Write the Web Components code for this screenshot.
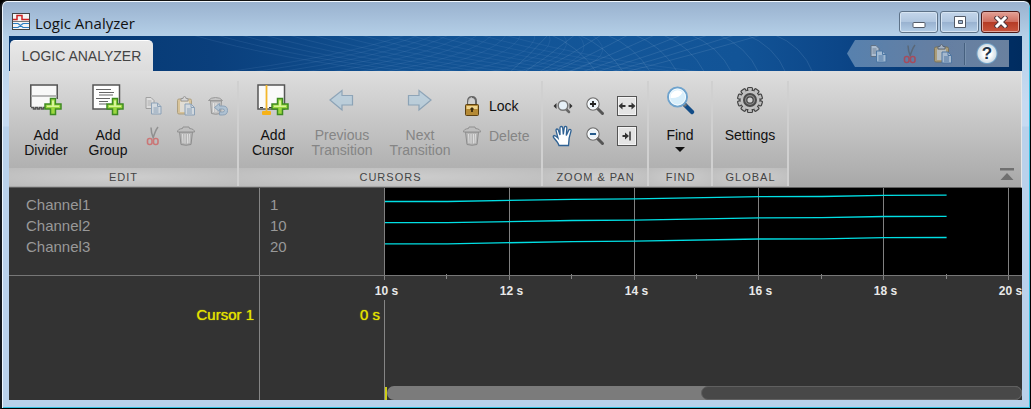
<!DOCTYPE html>
<html lang="en">
<head>
<meta charset="utf-8">
<title>Logic Analyzer</title>
<style>
  html, body { margin: 0; height: 100%; background: #000; }
  body { font-family: "Liberation Sans", Arial, sans-serif; overflow: hidden; }
</style>
</head>
<body>
<la-window>
  <la-titlebar slot="title">Logic Analyzer</la-titlebar>
  <la-header slot="header">LOGIC ANALYZER</la-header>
  <la-ribbon slot="ribbon">
    <la-section caption="EDIT" style="--w:230px; --pad:5px">
      <la-tool icon="divider" style="--tw:64px">Add<br>Divider</la-tool>
      <la-tool icon="group" style="--tw:60px">Add<br>Group</la-tool>
      <la-grid style="--cols:3">
        <la-tool small disabled icon="copy" label="Copy"></la-tool>
        <la-tool small disabled icon="paste" label="Paste"></la-tool>
        <la-tool small disabled icon="restore" label="Restore"></la-tool>
        <la-tool small disabled icon="cut" label="Cut"></la-tool>
        <la-tool small disabled icon="trash" label="Delete"></la-tool>
      </la-grid>
    </la-section>
    <la-section caption="CURSORS" style="--w:304px; --pad:1px">
      <la-tool icon="cursor" style="--tw:66px">Add<br>Cursor</la-tool>
      <la-tool disabled icon="prev" style="--tw:72px">Previous<br>Transition</la-tool>
      <la-tool disabled icon="next" style="--tw:84px">Next<br>Transition</la-tool>
      <la-grid style="--cols:1">
        <la-tool inline icon="lock">Lock</la-tool>
        <la-tool inline disabled icon="trash">Delete</la-tool>
      </la-grid>
    </la-section>
    <la-section caption="ZOOM &amp; PAN" style="--w:106px; --pad:4px">
      <la-grid style="--cols:3">
        <la-tool small icon="zoomx" label="Zoom in time"></la-tool>
        <la-tool small icon="zoomin" label="Zoom in"></la-tool>
        <la-tool small icon="fit" label="Fit to view"></la-tool>
        <la-tool small icon="pan" label="Pan"></la-tool>
        <la-tool small icon="zoomout" label="Zoom out"></la-tool>
        <la-tool small icon="last" label="Go to end"></la-tool>
      </la-grid>
    </la-section>
    <la-section caption="FIND" style="--w:64px; --pad:0px">
      <la-tool menu icon="find" style="--tw:62px">Find</la-tool>
    </la-section>
    <la-section caption="GLOBAL" style="--w:76px; --pad:0px">
      <la-tool icon="settings" style="--tw:74px">Settings</la-tool>
    </la-section>
  </la-ribbon>
  <la-viewer slot="main"></la-viewer>
</la-window>

<script>
const plus = `<path d="M20.500 14.500h5v5.500h5.500v5h-5.500v5.500h-5v-5.500h-5.500v-5h5.500z" fill="#9bd83f" stroke="#3f8a22" stroke-width="1.500"/><path d="M22 16.500h2v5h5v1.500h-12v-1.500h5z" fill="#d9f59a"/>`;
const pageBack = `<path d="M1.500.5h5l3 3v8h-8z" fill="#eee" stroke="#666"/><path d="M3 4h4M3 6h5M3 8h5" stroke="#888" fill="none"/>`;
const pageFront = `<path d="M.5.500h6l3.500 3.500v7.500h-9.500z" fill="#dbe9f5" stroke="#3f6f9f"/><path d="M6.500.500v3.500h3.500M2.500 5.500h5M2.500 7.500h5M2.500 9.500h5" stroke="#3f6f9f" fill="none"/>`;
const trash = `<path d="M3.500 6l1.500 12.500q5 1.500 10 0l1.500-12.500z" fill="#aaa" stroke="#555"/><path d="M6.500 8l.5 9M9 8v9.500M11.500 8v9.500M13.500 8l-.5 9" stroke="#fff" fill="none"/><path d="M1.500 6q0-3 5-3.500l.5-1.500h6l.5 1.500q5 .5 5 3.500z" fill="#bbb" stroke="#555"/>`;
const clipboard = `<rect x="1.500" y="3" width="14" height="15" rx="1.500" fill="#e5b75a" stroke="#8a6a25"/><rect x="4" y="5.500" width="9" height="10.500" fill="#f8f0dc"/><path d="M5 5v-2.500h2q0-2 1.500-2t1.500 2h2v2.500z" fill="#ddd" stroke="#555"/>`;
const lens = `<path d="M12 12l5.500 5.500" stroke="#555" stroke-width="3" stroke-linecap="round"/><circle cx="8" cy="8" r="6" fill="#e9f2f8" stroke="#777" stroke-width="1.500"/><circle cx="8" cy="8" r="5" fill="none" stroke="#fff"/>`;
const frame = `<rect x=".5" y=".5" width="19" height="19" fill="#e4e4e4" stroke="#555"/><rect x="1.500" y="1.500" width="17" height="17" fill="none" stroke="#f4f4f4"/>`;

const teeth = (attrs) => Array.from({ length: 10 }, (_, i) =>
  `<rect ${attrs} transform="rotate(${i * 36} 16 16)"/>`).join("");

const ICONS = {
  divider: [32, `<rect x="1.500" y="1.500" width="25" height="22" fill="#f8f8f8"/><path d="M.75 23v-22h26.500v14M1 23.500h2.500v1.500h2v-1.500h2v1.500h2v-1.500h2v1.500h2v-1.500h2" fill="none" stroke="#555" stroke-width="1.500"/><path d="M1.500 12h25" stroke="#b5b5b5" stroke-width="2"/>${plus}`],
  group: [32, `<rect x="1" y="1" width="26.500" height="24" fill="#fff" stroke="#555" stroke-width="1.500"/><path d="M4 5.500h15M7 8.500h15M4 14.500h14M7 17.500h9M7 11h14M7 20h8" stroke="#666" stroke-width="1.200"/>${plus}`],
  cursor: [32, `<rect x="1" y="1" width="26.500" height="24" fill="#fafafa" stroke="#555" stroke-width="1.500"/><path d="M3 23.500h3M12 23.500h3" stroke="#333"/><path d="M9.500 1v27" stroke="#f3b72b" stroke-width="1.800"/><rect x="5" y="27" width="9" height="4" rx="1" fill="#f6b218"/>${plus}`],
  prev: [32, `<path d="M4 16l12-9.500v5h10.500v9.500h-10.500v5z" fill="#a2cbe6" stroke="#3c6e98" stroke-width="1.200"/>`],
  next: [32, `<path d="M27 16l-12-9.500v5h-10.500v9.500h10.500v5z" fill="#a2cbe6" stroke="#3c6e98" stroke-width="1.200"/>`],
  find: [32, `<path d="M20 20l8 8" stroke="#124c87" stroke-width="4.500" stroke-linecap="round"/><path d="M19 19l3 3" stroke="#777" stroke-width="3"/><circle cx="13.500" cy="13" r="9.500" fill="#d7eefb" stroke="#6fa3cd" stroke-width="2"/><path d="M6.500 14a7 7 0 0 1 12-5.500q-3 6-12 5.500z" fill="#fff"/><circle cx="13.500" cy="13" r="8" fill="none" stroke="#f4fbff"/>`],
  settings: [32, `${teeth('x="13.500" y="3.500" width="5" height="5" rx="1" fill="#b5b5b5" stroke="#444" stroke-width="1.200"')}<circle cx="16" cy="16" r="10" fill="#c4c4c4" stroke="#444"/>${teeth('x="14.500" y="4.500" width="3" height="6" fill="#bebebe"')}<circle cx="16" cy="16" r="6" fill="#8a8a8a" stroke="#4a4a4a" stroke-width="2"/><circle cx="16" cy="16" r="3.200" fill="#d0d0d0" stroke="#444" stroke-width="1.200"/>`],
  copy: [20, `<g transform="translate(.5 1)">${pageBack}</g><g transform="translate(7 6.500)">${pageFront}</g>`],
  paste: [20, `${clipboard}<g transform="translate(8.500 7.500)">${pageFront}</g>`],
  restore: [20, `<path d="M2.500 5l1 12.500q4 1.500 9 0l1-12.500z" fill="#bbb" stroke="#555"/><path d="M.5 4.500q2-3 7-3t7 3z" fill="#bbb" stroke="#555"/><path d="M5.500 7v9M8 7v9" stroke="#fff"/><path d="M6.500 11.500l5-4v2.500h3.500q4.500 0 4.500 4.500t-5 4.500h-3v-3h3q2 0 2-1.500t-2-1.500h-3v2.500z" fill="#8fb8dc" stroke="#3f6f9f"/>`],
  cut: [20, `<path d="M7 1.500q0 5 2.500 11M14 1q-3 4-5 11.500" stroke="#555" stroke-width="1.500" fill="none"/><rect x="3.500" y="12.500" width="4.500" height="6" rx="2" fill="none" stroke="#d22" stroke-width="1.600"/><rect x="9.500" y="12.500" width="4.500" height="6" rx="2" fill="none" stroke="#d22" stroke-width="1.600"/>`],
  trash: [20, trash],
  lock: [20, `<path d="M6 9v-3.500q0-4.500 4-4.500t4 4.500v3.500" fill="none" stroke="#666" stroke-width="2"/><path d="M6.500 9v-3.500q0-3.500 3.500-4" fill="none" stroke="#ddd" stroke-width=".8"/><rect x="3.500" y="8.500" width="13" height="11" rx="1" fill="#b58a35" stroke="#5b4012"/><path d="M4.500 10h11v3h-11z" fill="#efd48d"/><path d="M10 11.500v4.500M8.500 13h3" stroke="#3a280a" stroke-width="1.800"/>`],
  zoomx: [20, `<path d="M3.500 7v6l-3-3zM16.500 7v6l3-3z" fill="#333"/><path d="M13 13l3 3" stroke="#666" stroke-width="2.500" stroke-linecap="round"/><circle cx="10" cy="9.500" r="4.800" fill="#e6f0f7" stroke="#777" stroke-width="1.500"/>`],
  zoomin: [20, `${lens}<path d="M8 5v6M5 8h6" stroke="#222" stroke-width="1.800"/>`],
  zoomout: [20, `${lens}<path d="M5 8h6" stroke="#235a8c" stroke-width="2"/>`],
  fit: [20, `${frame}<path d="M1.500 10l4-3.500v2.500h3v2h-3v2.500zM18.500 10l-4-3.500v2.500h-3v2h3v2.500z" fill="#333"/>`],
  last: [20, `${frame}<path d="M12 10l-4-3.500v2.500h-2.500v2h2.500v2.500z" fill="#333"/><path d="M13 5.500v9" stroke="#333" stroke-width="1.500"/>`],
  pan: [20, `<path d="M6 19.500q-1-3-5-7.500-1.500-2 0-2.500 1.500 0 4 2.500l-2-7.500q0-1.500 1-1.500t1.500 1.500l1.500 4.500v-7q0-1.500 1.300-1.500t1.400 1.500l.6 6.500 1-7q.3-1.300 1.500-1t1 1.500l-.5 7.500 2.500-5.500q.8-1 1.700-.5t.5 1.500q-2.500 7-2.500 14.500z" fill="#fff" stroke="#2f6294" stroke-width="1.300"/>`],
  app: [18, `<rect x=".5" y=".5" width="17" height="16" fill="#f4f4f4" stroke="#444"/><path d="M1 6.500h4v-4h5v4h7" fill="none" stroke="#c22" stroke-width="1.500"/><path d="M1 8.500h16" stroke="#777"/><path d="M1 10.500h5l5 4h6M1 14.500h5l5-4h6" fill="none" stroke="#2b7fc4" stroke-width="1.200"/>`]
};

function define(name, html, setup) {
  const tpl = document.createElement("template");
  tpl.innerHTML = html;
  customElements.define(name, class extends HTMLElement {
    constructor() {
      super();
      this.attachShadow({ mode: "open" });
    }
    connectedCallback() {
      if (this.shadowRoot.childNodes.length) return;
      this.shadowRoot.append(tpl.content.cloneNode(true));
      if (setup) setup(this, this.shadowRoot);
    }
  });
}

define("la-icon", `<style>:host{display:block;flex:none} svg{display:block;overflow:visible}</style>`, (el, root) => {
  const [size, art] = ICONS[el.getAttribute("name")];
  root.innerHTML += `<svg width="${size}" height="${size}" viewBox="0 0 ${size} ${size}" aria-hidden="true">${art}</svg>`;
});

define("la-window", `
<style>
  :host { display:flex; flex-direction:column; box-sizing:border-box; height:100vh; padding:0 8px 8px 7px;
    border:1px solid #111; border-right-color:#000; border-left:2px solid #15181d; border-bottom-color:#000; border-radius:7px 7px 0 0;
    box-shadow: inset 0 1px #f2f8ff, inset 1px 0 #eef6ff, inset -1px -1px #35bfe0;
    background: linear-gradient(#99b1ce, #b5d0e8 36px, #c6daf1 100px, #c6daf1 125px, #b9d1eb 126px); }
  .content { flex:1; min-height:0; display:flex; flex-direction:column; overflow:hidden; background:#333; }
</style>
<slot name="title"></slot>
<div class="content"><slot name="header"></slot><slot name="ribbon"></slot><slot name="main"></slot></div>`);

define("la-titlebar", `
<style>
  :host { display:flex; align-items:center; height:35px; flex:none; padding:0 2px 0 3px; box-sizing:border-box;
    font:15px/20px "Open Sans","Segoe UI",sans-serif; color:#111; }
  .name { flex:1; margin-left:5px; padding-top:8px; }
  la-icon { margin-top:6px; }
  .controls { display:flex; gap:2px; padding-top:7px; }
  button { width:39px; height:22px; padding:0; box-sizing:border-box; display:grid; place-items:center; border:1px solid #5d7288; border-radius:3px;
    background:linear-gradient(#c4d6ea,#b0c6df 48%,#98b1cf 50%,#b3cde6); box-shadow:inset 0 0 0 1px #d6e4f2; }
  .close { border-color:#4e1a18; background:linear-gradient(#e3a196,#cf6f60 48%,#b43a24 50%,#c9553d); box-shadow:inset 0 0 0 1px #e2a79c; }
  svg { display:block; }
</style>
<la-icon name="app"></la-icon>
<span class="name"><slot></slot></span>
<div class="controls">
  <button aria-label="Minimize"><svg width="14" height="14"><rect x="1" y="7.500" width="12" height="5" rx="1" fill="#fff" stroke="#535b68"/></svg></button>
  <button aria-label="Maximize"><svg width="14" height="12"><path d="M1.500.5h11v11h-11z" fill="#fff" stroke="#535b68"/><path d="M5.500 4.500h4v3h-4z" fill="#9fb7d2" stroke="#535b68"/></svg></button>
  <button class="close" aria-label="Close"><svg width="14" height="12"><path d="M3 2l8 8M11 2l-8 8" stroke="#53393d" stroke-width="5" stroke-linecap="square"/><path d="M3 2l8 8M11 2l-8 8" stroke="#fff" stroke-width="3" stroke-linecap="square"/></svg></button>
</div>`);

define("la-header", `
<style>
  :host { display:flex; flex:none; height:35px; justify-content:space-between; padding:4px 13px 0 1px; box-sizing:border-box; position:relative;
    background:linear-gradient(90deg,#04366f,#0a3f7c 20%,#115192 38%,#135699 60%,#125497 72%,#0c4688 82%,#003068 96%,#002c60); }
  .mesh { position:absolute; inset:0; width:100%; height:100%; }
  .tab { position:relative; border:0; border-top:1px solid #fff; border-radius:5px 5px 0 0; width:143px; height:31px; padding:0 0 1px; white-space:nowrap;
    background:linear-gradient(#e8e8e8,#dcdcdc); color:#444; font:14px/20px "Liberation Sans",Arial,sans-serif; }
  .quick { position:relative; display:flex; align-items:center; width:162px; height:27px; padding:0 10px 0 16px; box-sizing:border-box;
    clip-path:polygon(0 50%,8px 0,100% 0,100% 100%,8px 100%); background:linear-gradient(90deg,#5781ae,#647fa3 50%,#6a819f); }
  .quick button { border:0; padding:0; background:none; width:32px; height:27px; display:grid; place-items:center; }
  .quick .dim { opacity:.55; }
  .rule { width:1px; height:22px; margin:0 9px 0 5px; background:#46607f; border-right:1px solid #7891ae; }
  .quick .help { width:24px; background:radial-gradient(circle at 50% 50%,#fff 4px,#d5e0e8 9px,#6fa0c6 10px,transparent 11px);
    font:bold 17px/24px "Liberation Sans",Arial,sans-serif; color:#223448; }
</style>
<svg class="mesh" aria-hidden="true"></svg>
<button class="tab" role="tab" aria-selected="true"><slot></slot></button>
<div class="quick">
  <button class="dim" disabled aria-label="Copy"><la-icon name="copy"></la-icon></button>
  <button class="dim" disabled aria-label="Cut"><la-icon name="cut"></la-icon></button>
  <button class="dim" disabled aria-label="Paste"><la-icon name="paste"></la-icon></button>
  <span class="rule"></span>
  <button class="help" aria-label="Help">?</button>
</div>`, (el, root) => {
  let d = "", e = "";
  for (let i = 0; i < 14; i++) {
    d += `M${180 + i * 24} -2Q${270 + i * 24} 24 ${400 + i * 24} 38`;
    d += `M${200 + i * 27} 38Q${330 + i * 22} 22 ${400 + i * 14} -2`;
  }
  for (let i = 0; i < 9; i++) {
    e += `M${500 + i * 14} 37Q${520 + i * 20} 20 ${540 + i * 27} -2`;
    e += `M${540 + i * 28} -2Q${570 + i * 28} 10 ${588 + i * 27} 37`;
  }
  root.querySelector(".mesh").innerHTML =
    `<path d="${d}" fill="none" stroke="#6f9acb" stroke-opacity=".14"/><path d="${e}" fill="none" stroke="#7ea4cf" stroke-opacity=".2"/>`;
});

define("la-ribbon", `
<style>
  :host { display:flex; flex:none; padding:10px 7px 1px 0; box-sizing:border-box; border-bottom:1px solid #5f5f5f;
    border-right:1px solid #e8e8e8; background:linear-gradient(#dedede,#a8a8a8 115px); }
  .collapse { margin:0 0 5px auto; align-self:flex-end; border:0; padding:0; background:none; }
  svg { display:block; }
</style>
<slot></slot>
<button class="collapse" aria-label="Minimize ribbon"><svg width="14" height="14"><path d="M0 1h14v2.500h-14zM7 6l6.500 7h-13z" fill="#707070"/></svg></button>`);

define("la-section", `
<style>
  :host { display:flex; flex-direction:column; flex:none; box-sizing:border-box; width:var(--w); height:105px; border-right:2px solid; border-image:linear-gradient(90deg,#aaa 50%,#d0d0d0 50%) 1; }
  .tools { display:flex; flex:1; align-items:flex-start; padding:3px 0 0 var(--pad); }
  .caption { text-align:center; height:18px; font-size:11px; line-height:18px; letter-spacing:1px; text-indent:1px; color:#444;
    background:radial-gradient(ellipse at center,#cecece,#bcbcbc); }
</style>
<div class="tools"><slot></slot></div>
<div class="caption"></div>`, (el, root) => {
  root.querySelector(".caption").textContent = el.getAttribute("caption");
});

define("la-grid", `
<style>
  :host { display:grid; grid-template-columns:repeat(var(--cols),32px); grid-auto-rows:30px; padding-top:7px; }
</style><slot></slot>`);

define("la-tool", `
<style>
  :host { display:block; width:var(--tw); }
  button { border:0; padding:0; background:none; font:14px/15px "Liberation Sans",Arial,sans-serif; color:#111; width:100%;
    display:flex; flex-direction:column; align-items:center; white-space:nowrap; }
  button > span { margin-top:12px; }
  button:disabled { color:#858585; }
  button:disabled la-icon { opacity:.45; }
  :host([small]) { width:32px; height:30px; }
  :host([small]) button { width:32px; height:30px; justify-content:center; }
  :host([small]) button > span { display:none; }
  :host([inline]) button { flex-direction:row; height:30px; gap:7px; width:auto; }
  :host([inline]) button > span { margin:0; }
  .arrow { display:none; }
  :host([menu]) .arrow { display:block; margin-top:4px; border:5px solid transparent; border-top-color:#111; border-bottom:0; }
</style>
<button type="button"><span><slot></slot></span><i class="arrow"></i></button>`, (el, root) => {
  const button = root.querySelector("button");
  const icon = document.createElement("la-icon");
  icon.setAttribute("name", el.getAttribute("icon"));
  button.prepend(icon);
  button.disabled = el.hasAttribute("disabled");
  if (el.hasAttribute("label")) button.setAttribute("aria-label", el.getAttribute("label"));
});

define("la-viewer", `
<style>
  :host { display:grid; flex:1; min-height:0; grid-template:88px 1fr / 375px 1fr; background:#333; }
  .data, .info { background:linear-gradient(#858585,#858585) 250px 0 / 1px 100% no-repeat; }
  .data { border-bottom:1px solid #777; }
  table { border-collapse:collapse; table-layout:fixed; width:100%; font-size:15px; line-height:21px; }
  td, th { padding:0 0 0 17px; font-weight:normal; text-align:left; }
  th { width:234px; }
  td { padding-left:10px; }
  .data { padding-top:6px; color:#999; }
  .info { padding-top:28px; color:#e3e300; text-shadow:0 0 1px #e3e300; }
  .info th { text-align:right; padding:0 5px 0 0; width:245px; }
  .info td { text-align:right; padding-right:4px; }
  .lower { display:flex; flex-direction:column; min-width:0; }
  .space { flex:1; margin-top:24px; border-left:1px solid #858585; display:flex; align-items:flex-end; }
  .mark { width:2px; height:13px; background:#cfcf18; }
  .track { flex:1; display:flex; height:14px; border-radius:7px; background:#7b7b7b; }
  .before { flex:63; }
  .thumb { flex:64; height:14px; box-sizing:border-box; border:1px solid #606060; border-radius:7px; background:#484848; }
</style>
<div class="data">
  <table aria-label="Channels">
    <tr><th scope="row">Channel1</th><td>1</td></tr>
    <tr><th scope="row">Channel2</th><td>10</td></tr>
    <tr><th scope="row">Channel3</th><td>20</td></tr>
  </table>
</div>
<la-plot></la-plot>
<div class="info">
  <table aria-label="Cursors"><tr><th scope="row">Cursor 1</th><td>0 s</td></tr></table>
</div>
<div class="lower"><div class="space"><span class="mark"></span><div class="track" role="scrollbar" aria-label="Time"><span class="before"></span><div class="thumb"></div></div></div></div>`);

define("la-plot", `
<style>
  :host { display:block; min-width:0; height:87px; }
  svg { display:block; width:100%; height:87px; overflow:visible; }
  text { font:bold 12px "Liberation Sans",Arial,sans-serif; fill:#e8e8e8; text-anchor:middle; }
</style>`, (el, root) => {
  const second = 62.4;
  const rise = [[0, 0], [1, 0], [3, 2.2], [4, 2.6], [6, 4.8], [7, 5], [8, 6.2], [9, 6.3]];
  let art = `<rect width="100%" height="87" fill="#000"/>`;
  for (let s = 0; s <= 10; s++) {
    const x = Math.round(s * second) + .5;
    if (s % 2) art += `<path d="M${x} 86v5" stroke="#888"/>`;
    else art += `<path d="M${x} 0v92" stroke="#808080"/><text x="${x + 2}" y="107">${10 + s} s</text>`;
  }
  for (const y of [13.5, 34.7, 55.8])
    art += `<polyline points="${rise.map(([s, r]) => `${1 + s * second},${y - r}`).join(" ")}" fill="none" stroke="#00dfe4" stroke-width="1.300"/>`;
  art += `<path d="M0 87.500h2000" stroke="#777"/>`;
  root.innerHTML += `<svg role="img" aria-label="Channel waveforms">${art}</svg>`;
});
</script>
</body>
</html>
